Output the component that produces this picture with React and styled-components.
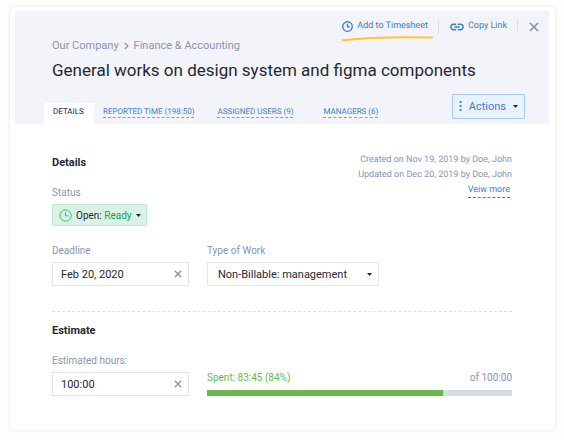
import React, { useState } from 'react';
import styled, { createGlobalStyle } from 'styled-components';

const GlobalStyle = createGlobalStyle`
  * {
    box-sizing: border-box;
  }

  body {
    margin: 0;
    background-color: #fefefe;
    font-family: Roboto, 'Liberation Sans', sans-serif;
    font-size: 11px;
    line-height: 14px;
    color: #25282d;
  }

  button, input, select {
    font-family: inherit;
    color: inherit;
  }
`;

const Card = styled.main`
  margin: 7px 9px 10px 10px;
  padding: 4px 6px 0 5px;
  background-color: #fff;
  border-radius: 5px;
  box-shadow: 0 0 4px rgba(0, 0, 0, 0.1);
`;

const Header = styled.header`
  padding: 8px 10px 0 29px;
  background-color: #f3f4f9;
`;

const Toolbar = styled.div`
  display: flex;
  justify-content: flex-end;
  align-items: center;
  height: 15px;
  margin-bottom: 5px;
`;

const ToolbarButton = styled.button`
  position: relative;
  display: flex;
  align-items: center;
  gap: 4px;
  padding: 0;
  border: none;
  background: none;
  color: #3b7fcb;
  font-size: 9px;
  line-height: 17px;
  text-rendering: geometricPrecision;
  cursor: pointer;
`;

const Highlight = styled.svg`
  position: absolute;
  left: 0;
  top: 17px;
  width: 92px;
  height: 7px;
`;

const Divider = styled.span`
  width: 1px;
  height: 15px;
  margin: 0 11px 0 10px;
  background-color: #dfe2e8;
`;

const IconButton = styled.button`
  display: flex;
  padding: 0;
  border: none;
  background: none;
  color: #8593ad;
  cursor: pointer;
`;

const Breadcrumbs = styled.nav`
  display: flex;
  align-items: center;
  gap: 5px;
  margin-bottom: 5px;
  padding-left: 8px;
  color: #8795b1;
`;

const Crumb = styled.a`
  color: inherit;
  text-decoration: none;
`;

const Title = styled.h1`
  margin: 0 0 12px;
  padding-left: 8px;
  font-size: 17px;
  font-weight: 400;
  line-height: 24px;
`;

const HeaderBottom = styled.div`
  display: flex;
  justify-content: space-between;
  height: 30px;
  padding-right: 14px;
`;

const Tabs = styled.nav`
  display: flex;
  align-items: flex-end;
`;

const Tab = styled.a`
  min-width: ${props => (props.$active ? '50px' : '106px')};
  height: 21px;
  padding: ${props => (props.$active ? '4px 9px 0' : '4px 14px 0 9px')};
  background-color: ${props => (props.$active ? '#fff' : 'transparent')};
  color: ${props => (props.$active ? '#25282d' : '#3b7fcb')};
  font-size: 8px;
  line-height: 10px;
  text-decoration: none;
  text-rendering: geometricPrecision;
  white-space: nowrap;
`;

const TabLabel = styled.span`
  display: inline-block;
  border-bottom: 1px ${props => (props.$active ? 'solid transparent' : 'dashed #6fa2dc')};
`;

const ActionsButton = styled.button`
  display: flex;
  align-items: center;
  gap: 7px;
  height: 25px;
  padding: 0 6px;
  border: 1px solid #a9cbf0;
  border-radius: 1px;
  background-color: #e9f2fd;
  color: #3b7fcb;
  font-size: 11px;
  cursor: pointer;
`;

const Body = styled.div`
  padding: 29px 37px 34px;
`;

const DetailsTop = styled.section`
  display: flex;
  justify-content: space-between;
  align-items: flex-start;
`;

const SectionTitle = styled.h2`
  margin: 0;
  padding: 3px 0;
  font-size: 11px;
  font-weight: 700;
  line-height: 14px;
`;

const Label = styled.label`
  display: block;
  margin-bottom: 4px;
  color: #8795b1;
  font-size: 10px;
  line-height: 14px;
`;

const StatusField = styled.div`
  margin-top: 13px;
`;

const StatusButton = styled.button`
  display: flex;
  align-items: center;
  gap: 4px;
  height: 22px;
  padding: 0 5px 0 6px;
  border: 1px solid #bfe9d3;
  border-radius: 1px;
  background-color: #d9f2e5;
  font-size: 10px;
  cursor: pointer;

  svg:first-child {
    color: #2fb673;
  }
`;

const StatusValue = styled.span`
  color: #1b9c57;
`;

const Meta = styled.div`
  color: #8795b1;
  font-size: 9px;
  line-height: 15px;
  text-align: right;
  text-rendering: geometricPrecision;
`;

const MetaLine = styled.p`
  margin: 0;
`;

const MoreLink = styled.a`
  display: inline-block;
  margin-right: 2px;
  border-bottom: 1px dashed #3b7fcb;
  color: #3b7fcb;
  line-height: 13px;
  text-decoration: none;
`;

const FieldRow = styled.div`
  display: grid;
  grid-template-columns: 137px 1fr;
  gap: 18px;
  margin-top: ${props => (props.$tight ? '13px' : '18px')};
`;

const Control = styled.div`
  display: flex;
  align-items: center;
  width: ${props => (props.$wide ? '172px' : '137px')};
  height: 24px;
  padding-right: 6px;
  border: 1px solid #e4e6ea;
  background-color: #fff;
`;

const TextInput = styled.input`
  flex: 1;
  min-width: 0;
  padding: 0 0 0 8px;
  border: none;
  outline: none;
  background: none;
  font-size: 11px;
`;

const Select = styled.select`
  flex: 1;
  min-width: 0;
  padding: 0 0 0 10px;
  border: none;
  outline: none;
  background: none;
  appearance: none;
  font-size: 11px;
`;

const Rule = styled.hr`
  margin: 25px 0 9px;
  border: none;
  border-top: 1px dashed #dddfe3;
`;

const Progress = styled.div`
  align-self: end;
`;

const ProgressText = styled.div`
  display: flex;
  justify-content: space-between;
  margin-bottom: 5px;
  color: #8795b1;
  font-size: 10px;
`;

const Spent = styled.span`
  color: #67b84d;
`;

const Track = styled.div`
  height: 6px;
  background-color: #d5dbe5;
`;

const Fill = styled.div`
  height: 100%;
  background-color: #67b84d;
`;

const ClockIcon = ({ size, stroke }) => (
  <svg width={size} height={size} viewBox="0 0 12 12" fill="none" stroke="currentColor" strokeWidth={stroke}>
    <circle cx="6" cy="6" r="5.2" />
    <path d="M6 3v3.3h2.6" />
  </svg>
);

const LinkIcon = () => (
  <svg width="14" height="8" viewBox="0 0 14 8" fill="none" stroke="currentColor" strokeWidth="1.5">
    <path d="M6.2 1.2H3.7a2.8 2.8 0 0 0 0 5.6h2.5M7.8 1.2h2.5a2.8 2.8 0 0 1 0 5.6H7.8M4.3 4h5.4" />
  </svg>
);

const CrossIcon = ({ size }) => (
  <svg width={size} height={size} viewBox="0 0 10 10" fill="none" stroke="currentColor" strokeWidth="1.7">
    <path d="M1 1l8 8M9 1l-8 8" />
  </svg>
);

const ChevronIcon = () => (
  <svg width="5" height="8" viewBox="0 0 5 8" fill="none" stroke="currentColor" strokeWidth="1.2">
    <path d="M.8 1l3.2 3-3.2 3" />
  </svg>
);

const CaretIcon = () => (
  <svg width="5" height="3" viewBox="0 0 5 3" fill="#25282d">
    <path d="M0 0h5L2.5 3z" />
  </svg>
);

const DotsIcon = () => (
  <svg width="3" height="11" viewBox="0 0 3 11" fill="#3f8fe4">
    <rect x=".5" y="0" width="2" height="2" />
    <rect x=".5" y="4" width="2" height="2" />
    <rect x=".5" y="8" width="2" height="2" />
  </svg>
);

const tabs = [
  { id: 'details', label: 'DETAILS' },
  { id: 'time', label: 'REPORTED TIME (198:50)' },
  { id: 'users', label: 'ASSIGNED USERS (9)' },
  { id: 'managers', label: 'MANAGERS (6)' }
];

const App = () => {
  const [activeTab, setActiveTab] = useState('details');
  const [deadline, setDeadline] = useState('Feb 20, 2020');
  const [hours, setHours] = useState('100:00');
  const progress = 77.4;

  return (
    <>
      <GlobalStyle />
      <Card>
        <Header>
          <Toolbar>
            <ToolbarButton type="button">
              <ClockIcon size={11} stroke={1.4} />
              Add to Timesheet
              <Highlight viewBox="0 0 92 7" fill="none" stroke="#fdc62f" strokeWidth="2" strokeLinecap="round">
                <path d="M1 5.3C28 2.2 58 1.8 90 2.6" />
              </Highlight>
            </ToolbarButton>
            <Divider />
            <ToolbarButton type="button">
              <LinkIcon />
              Copy Link
            </ToolbarButton>
            <Divider />
            <IconButton type="button" aria-label="Close">
              <CrossIcon size={10} />
            </IconButton>
          </Toolbar>
          <Breadcrumbs>
            <Crumb href="#company">Our Company</Crumb>
            <ChevronIcon />
            <Crumb href="#finance">Finance &amp; Accounting</Crumb>
          </Breadcrumbs>
          <Title>General works on design system and figma components</Title>
          <HeaderBottom>
            <Tabs>
              {tabs.map(tab => (
                <Tab
                  key={tab.id}
                  href={`#${tab.id}`}
                  $active={activeTab === tab.id}
                  onClick={() => setActiveTab(tab.id)}
                >
                  <TabLabel $active={activeTab === tab.id}>{tab.label}</TabLabel>
                </Tab>
              ))}
            </Tabs>
            <ActionsButton type="button">
              <DotsIcon />
              Actions
              <CaretIcon />
            </ActionsButton>
          </HeaderBottom>
        </Header>

        <Body>
          <DetailsTop>
            <div>
              <SectionTitle>Details</SectionTitle>
              <StatusField>
                <Label htmlFor="status">Status</Label>
                <StatusButton id="status" type="button">
                  <ClockIcon size={13} stroke={0.9} />
                  <span>Open: <StatusValue>Ready</StatusValue></span>
                  <CaretIcon />
                </StatusButton>
              </StatusField>
            </div>
            <Meta>
              <MetaLine>Created on Nov 19, 2019 by Doe, John</MetaLine>
              <MetaLine>Updated on Dec 20, 2019 by Doe, John</MetaLine>
              <MoreLink href="#more">Veiw more</MoreLink>
            </Meta>
          </DetailsTop>

          <FieldRow>
            <div>
              <Label htmlFor="deadline">Deadline</Label>
              <Control>
                <TextInput id="deadline" value={deadline} onChange={e => setDeadline(e.target.value)} />
                <IconButton type="button" aria-label="Clear deadline" onClick={() => setDeadline('')}>
                  <CrossIcon size={8} />
                </IconButton>
              </Control>
            </div>
            <div>
              <Label htmlFor="work">Type of Work</Label>
              <Control $wide>
                <Select id="work" defaultValue="management">
                  <option value="management">Non-Billable: management</option>
                </Select>
                <CaretIcon />
              </Control>
            </div>
          </FieldRow>

          <Rule />

          <section>
            <SectionTitle>Estimate</SectionTitle>
            <FieldRow $tight>
              <div>
                <Label htmlFor="hours">Estimated hours:</Label>
                <Control>
                  <TextInput id="hours" value={hours} onChange={e => setHours(e.target.value)} />
                  <IconButton type="button" aria-label="Clear hours" onClick={() => setHours('')}>
                    <CrossIcon size={8} />
                  </IconButton>
                </Control>
              </div>
              <Progress>
                <ProgressText>
                  <Spent>Spent: 83:45 (84%)</Spent>
                  <span>of 100:00</span>
                </ProgressText>
                <Track>
                  <Fill style={{ width: `${progress}%` }} />
                </Track>
              </Progress>
            </FieldRow>
          </section>
        </Body>
      </Card>
    </>
  );
};

export default App;
